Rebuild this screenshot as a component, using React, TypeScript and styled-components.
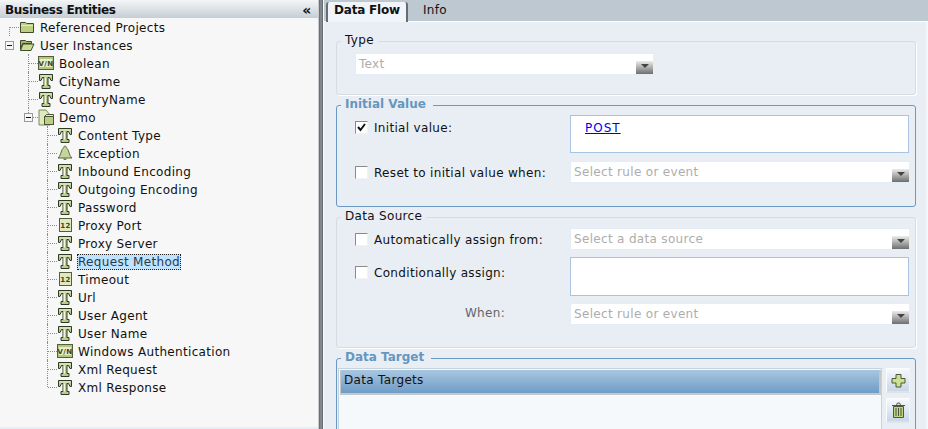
import { ReactNode } from 'react'
import styled, { createGlobalStyle, css } from 'styled-components'

const GlobalStyle = createGlobalStyle`
  html, body {
    margin: 0;
    padding: 0;
    background: #f7f7f7;
    overflow: hidden;
  }
  * {
    box-sizing: border-box;
  }
`

const Page = styled.div`
  width: 928px;
  height: 429px;
  display: flex;
  overflow: hidden;
  font-family: 'DejaVu Sans', Verdana, sans-serif;
  font-size: 12px;
  letter-spacing: 0.32px;
  color: #111;
`

const LeftPanel = styled.div`
  width: 318px;
  height: 429px;
  display: flex;
  flex-direction: column;
  background: #f7f7f7;
`

const PanelHeader = styled.div`
  height: 18px;
  flex: none;
  padding: 2px 7px 0 5px;
  display: flex;
  align-items: center;
  justify-content: space-between;
  background: linear-gradient(#f4f6f7, #c6ced4);
  font-weight: bold;
  letter-spacing: -0.3px;
`

const Collapse = styled.span`
  font-size: 14px;
  line-height: 14px;
  font-weight: bold;
`

const Tree = styled.div`
  flex: 1;
`

const FooterStrip = styled.div`
  height: 2px;
  flex: none;
  background: #e9eef5;
`

const Row = styled.div`
  height: 18px;
  display: flex;
  align-items: center;
`

const Guide = styled.div<{ $kind: GuideKind }>`
  position: relative;
  width: 19px;
  height: 18px;
  flex: none;

  ${({ $kind }) =>
    $kind !== 'none' &&
    css`
      &::before {
        content: '';
        position: absolute;
        left: 9px;
        top: ${$kind === 'first' ? '9px' : '0'};
        height: ${$kind === 'last' || $kind === 'first' ? '9px' : '18px'};
        border-left: 1px dotted #8d8d8d;
      }
    `}

  ${({ $kind }) =>
    $kind !== 'none' &&
    $kind !== 'line' &&
    css`
      &::after {
        content: '';
        position: absolute;
        left: 10px;
        top: 9px;
        width: 9px;
        border-top: 1px dotted #8d8d8d;
      }
    `}
`

const Toggle = styled.div`
  position: absolute;
  z-index: 1;
  left: 5px;
  top: 5px;
  width: 9px;
  height: 9px;
  border: 1px solid #9a9a9a;
  background: #f7f7f7;

  &::after {
    content: '';
    position: absolute;
    left: 1px;
    top: 3px;
    width: 5px;
    height: 1px;
    background: #111;
  }
`

const IconSlot = styled.div`
  width: 16px;
  height: 18px;
  flex: none;
  display: flex;
  align-items: center;
  justify-content: center;
`

const RowLabel = styled.span<{ $selected?: boolean }>`
  margin-left: 4px;
  padding: 0 1px;
  height: 16px;
  align-self: flex-end;
  line-height: 16px;
  white-space: nowrap;
  ${({ $selected }) =>
    $selected &&
    css`
      background: #bfe3ff;
      outline: 1px dotted #222;
      outline-offset: -1px;
      color: #2a3a4a;
    `}
`

const Splitter = styled.div`
  width: 6px;
  flex: none;
  display: flex;
`

const SplitterBar = styled.div`
  width: 5px;
  background: linear-gradient(90deg, #c8ccd0 0, #c8ccd0 1px, #5d6368 1px, #8d9499 3px, #5d6368 5px);
`

const RightPanel = styled.div`
  flex: 1;
  min-width: 0;
  display: flex;
  flex-direction: column;
  background: #f4f6f9;
`

const TabBar = styled.div`
  height: 22px;
  flex: none;
  display: flex;
  padding: 2px 0 0 2px;
  background: #bdc8d1;
  border-bottom: 1px solid #fff;
`

const Tab = styled.div<{ $active?: boolean }>`
  height: 20px;
  line-height: 17px;
  ${({ $active }) =>
    $active
      ? css`
          width: 82px;
          padding-left: 6px;
          background: #f1f4f8;
          font-weight: bold;
          letter-spacing: -0.2px;
          border: solid #656c72;
          border-width: 0 2px;
          border-radius: 3px 3px 0 0;
        `
      : css`
          padding-left: 15px;
        `}
`

const Content = styled.div`
  flex: 1;
  min-height: 0;
  margin-right: 2px;
  padding: 11px 10px 0 12px;
  background: #e9eef5;
  display: flex;
  flex-direction: column;
  gap: 2px;
  overflow: hidden;
`

const Group = styled.fieldset<{ $accent?: boolean; $height: number }>`
  margin: 0;
  min-width: 0;
  height: ${({ $height }) => $height}px;
  flex: none;
  padding: 0 6px 0 18px;
  border: 1px solid ${({ $accent }) => ($accent ? '#6a98c2' : '#d6dce1')};
  border-radius: 3px;
  ${({ $accent }) => !$accent && 'box-shadow: 1px 1px 0 #fff;'}
`

const Legend = styled.legend<{ $accent?: boolean }>`
  margin-left: -14px;
  padding: 0 4px;
  height: 16px;
  line-height: 14px;
  background: #e9eef5;
  ${({ $accent }) =>
    $accent &&
    css`
      padding-right: 7px;
      font-weight: bold;
      letter-spacing: 0;
      line-height: 15px;
      color: #6596c0;
    `}
`

const FormRow = styled.div<{ $top: number }>`
  margin-top: ${({ $top }) => $top}px;
  display: flex;
  align-items: flex-start;
`

const CheckLabel = styled.div<{ $offset: number }>`
  width: 215px;
  flex: none;
  display: flex;
  align-items: center;
  gap: 6px;
  height: 13px;
  white-space: nowrap;
  margin-top: ${({ $offset }) => $offset}px;
`

const RightLabel = styled.div`
  width: 215px;
  flex: none;
  height: 22px;
  line-height: 20px;
  padding-right: 65px;
  text-align: right;
  color: #666;
`

const CheckBox = styled.span`
  width: 13px;
  height: 13px;
  flex: none;
  display: flex;
  align-items: center;
  justify-content: center;
  background: #fff;
  border: solid;
  border-width: 1px;
  border-color: #8a8a8a #f2f2f2 #f2f2f2 #8a8a8a;
`

const TextBox = styled.div<{ $height: number }>`
  width: 339px;
  height: ${({ $height }) => $height}px;
  padding: 5px 14px;
  background: #fff;
  border: 1px solid #a9c4e0;
`

const ValueLink = styled.a`
  color: #0000ee;
  letter-spacing: 1px;
  text-decoration: underline;
`

const SelectBox = styled.div<{ $width: number }>`
  width: ${({ $width }) => $width}px;
  height: 22px;
  flex: none;
  display: flex;
  padding-left: 3px;
  background: #fff;
  border: solid #e4ecf6;
  border-width: 1px 0 1px 1px;
  color: #adadad;
  line-height: 20px;
`

const SelectText = styled.span`
  flex: 1;
`

const SelectArrow = styled.span`
  width: 17px;
  height: 13px;
  flex: none;
  align-self: flex-end;
  display: flex;
  justify-content: center;
  padding-top: 3px;
  background: linear-gradient(#ececec, #6e6e6e);

  &::before {
    content: '';
    border: solid transparent;
    border-width: 4px 4px 0;
    border-top-color: #444;
    height: 0;
  }
`

const TargetBody = styled.div`
  margin: 2px 0 0 -17px;
  display: flex;
  gap: 4px;
`

const TargetGrid = styled.div`
  width: 544px;
  height: 90px;
  flex: none;
  padding: 1px 0 0 1px;
  background: #f5f9fc;
  border: 1px solid #c3d3df;
`

const GridHeader = styled.div`
  height: 25px;
  padding-left: 3px;
  line-height: 21px;
  background: linear-gradient(#a9c6e0, #6f9cc6);
  border: solid #c4c8cb;
  border-width: 0 2px 2px 1px;
`

const ButtonColumn = styled.div`
  display: flex;
  flex-direction: column;
  gap: 5px;
`

const ToolButton = styled.div`
  width: 24px;
  height: 25px;
  display: flex;
  align-items: center;
  justify-content: center;
  background: linear-gradient(#f6f9fc, #c9d7e9);
  border: solid;
  border-width: 1px 1px 2px 1px;
  border-color: #fbfcfe #f0f3f7 #dfe3e8 #fbfcfe;
`

type GuideKind = 'none' | 'line' | 'tee' | 'last' | 'first'

const TypeIcon = () => (
  <svg width="16" height="17" viewBox="0 0 16 17">
    <path
      d="M1.500 1.500h13v6h-1.500l-1.500-3h-1.500v8h2v3h-8v-3h2v-8H4.500L3 7.500H1.500z"
      fill="#b9cd8a"
      stroke="#2f3a22"
    />
    <path d="M6.500 4.500h1.500v8H6.500zM2.500 2.500h11v1h-11z" fill="#f1f6df" />
    <path d="M9 4.500h.5v8H9z" fill="#5f6f3c" />
  </svg>
)

const FolderIcon = () => (
  <svg width="16" height="14" viewBox="0 0 16 14">
    <path d="M1.500 2.500h5l1 1h7v9h-13z" fill="#bccf85" stroke="#3f4a2a" />
    <path d="M2 5h12v1H2z" fill="#e6eec8" />
  </svg>
)

const OpenFolderIcon = () => (
  <svg width="16" height="14" viewBox="0 0 16 14">
    <path d="M1.500 2.500h5l1 1h5v2h-9l-2 6z" fill="#a3b66c" stroke="#3f4a2a" />
    <path d="M4 6h11l-3 6.500H1.500z" fill="#cbdc97" stroke="#3f4a2a" />
  </svg>
)

const BoxIcon = ({ label }: { label: string }) => (
  <svg width="16" height="14" viewBox="0 0 16 14">
    <rect x="0.500" y="0.500" width="15" height="13" fill="#b4c77c" stroke="#555e3c" />
    <rect x="2" y="3" width="12" height="8" fill="#e7efc9" />
    <text x="8" y="10" textAnchor="middle" fontSize="7" fontWeight="bold" fontFamily="'DejaVu Sans', sans-serif" fill="#3a4426">
      {label}
    </text>
  </svg>
)

const CounterIcon = () => (
  <svg width="14" height="14" viewBox="0 0 14 14">
    <rect x="1.500" y="0.500" width="12" height="13" fill="#dfe9bd" stroke="#555e3c" />
    <text x="7.500" y="10" textAnchor="middle" fontSize="7" fontWeight="bold" fontFamily="'DejaVu Sans', sans-serif" fill="#3a4426">
      12
    </text>
  </svg>
)

const BellIcon = () => (
  <svg width="16" height="16" viewBox="0 0 16 16">
    <path d="M8 1c1 0 1 1 1.500 2C12 4 11.500 10 15 13H1C4.500 10 4 4 6.500 3 7 2 7 1 8 1z" fill="#c4d69a" stroke="#59653f" />
    <path d="M6 13.500h4L9 15H7z" fill="#6f7c4f" />
  </svg>
)

const PackageIcon = () => (
  <svg width="16" height="17" viewBox="0 0 16 17">
    <path d="M1 1h7l4 5v10H1z" fill="#dfe9bd" stroke="#7c8a58" />
    <rect x="6.500" y="7.500" width="9" height="8" fill="#bccd8a" stroke="#4b5533" />
    <path d="M6.500 7.500l2-2h7v2z" fill="#e7efc9" stroke="#4b5533" />
  </svg>
)

const CheckMark = () => (
  <svg width="11" height="11" viewBox="0 0 11 11">
    <path d="M2 5l2.500 3L9 2" fill="none" stroke="#111" strokeWidth="2" />
  </svg>
)

const AddIcon = () => (
  <svg width="15" height="15" viewBox="0 0 15 15">
    <path
      d="M5 1.500h5v4h4v4.500h-4v4H5v-4H1V5.500h4z"
      fill="#cddf93"
      stroke="#4d5636"
    />
  </svg>
)

const TrashIcon = () => (
  <svg width="15" height="17" viewBox="0 0 15 17">
    <path d="M1 3.500h13M5.500 3l1-2h2l1 2" fill="none" stroke="#4d5636" />
    <path d="M2.500 4.500h10v11h-10z" fill="#bfd483" stroke="#4d5636" />
    <path d="M5 6v8M7.500 6v8M10 6v8" stroke="#4d5636" />
  </svg>
)

type TreeItem = {
  label: string
  guides: GuideKind[]
  icon: ReactNode
  toggle?: boolean
  selected?: boolean
}

const lvl2 = (label: string, icon: ReactNode, last = false, selected = false): TreeItem => ({
  label,
  icon,
  selected,
  guides: ['none', 'none', last ? 'last' : 'tee'],
})

const items: TreeItem[] = [
  { label: 'Referenced Projects', guides: ['first'], icon: <FolderIcon /> },
  { label: 'User Instances', guides: ['none'], icon: <OpenFolderIcon />, toggle: true },
  { label: 'Boolean', guides: ['none', 'tee'], icon: <BoxIcon label="V/N" /> },
  { label: 'CityName', guides: ['none', 'tee'], icon: <TypeIcon /> },
  { label: 'CountryName', guides: ['none', 'tee'], icon: <TypeIcon /> },
  { label: 'Demo', guides: ['none', 'last'], icon: <PackageIcon />, toggle: true },
  lvl2('Content Type', <TypeIcon />),
  lvl2('Exception', <BellIcon />),
  lvl2('Inbound Encoding', <TypeIcon />),
  lvl2('Outgoing Encoding', <TypeIcon />),
  lvl2('Password', <TypeIcon />),
  lvl2('Proxy Port', <CounterIcon />),
  lvl2('Proxy Server', <TypeIcon />),
  lvl2('Request Method', <TypeIcon />, false, true),
  lvl2('Timeout', <CounterIcon />),
  lvl2('Url', <TypeIcon />),
  lvl2('User Agent', <TypeIcon />),
  lvl2('User Name', <TypeIcon />),
  lvl2('Windows Authentication', <BoxIcon label="V/N" />),
  lvl2('Xml Request', <TypeIcon />),
  lvl2('Xml Response', <TypeIcon />, true),
]

const App = () => (
  <Page>
    <GlobalStyle />
    <LeftPanel>
      <PanelHeader>
        Business Entities
        <Collapse>«</Collapse>
      </PanelHeader>
      <Tree>
        {items.map((item) => (
          <Row key={item.label}>
            {item.guides.map((kind, i) => (
              <Guide key={i} $kind={kind}>
                {item.toggle && i === item.guides.length - 1 && <Toggle />}
              </Guide>
            ))}
            <IconSlot>{item.icon}</IconSlot>
            <RowLabel $selected={item.selected}>{item.label}</RowLabel>
          </Row>
        ))}
      </Tree>
      <FooterStrip />
    </LeftPanel>
    <Splitter>
      <SplitterBar />
    </Splitter>
    <RightPanel>
      <TabBar>
        <Tab $active>Data Flow</Tab>
        <Tab>Info</Tab>
      </TabBar>
      <Content>
        <Group $height={62}>
          <Legend>Type</Legend>
          <FormRow $top={4}>
            <SelectBox $width={298}>
              <SelectText>Text</SelectText>
              <SelectArrow />
            </SelectBox>
          </FormRow>
        </Group>

        <Group $accent $height={110}>
          <Legend $accent>Initial Value</Legend>
          <FormRow $top={2}>
            <CheckLabel $offset={6}>
              <CheckBox>
                <CheckMark />
              </CheckBox>
              Initial value:
            </CheckLabel>
            <TextBox $height={38}>
              <ValueLink href="#">POST</ValueLink>
            </TextBox>
          </FormRow>
          <FormRow $top={8}>
            <CheckLabel $offset={5}>
              <CheckBox />
              Reset to initial value when:
            </CheckLabel>
            <SelectBox $width={339}>
              <SelectText>Select rule or event</SelectText>
              <SelectArrow />
            </SelectBox>
          </FormRow>
        </Group>

        <Group $height={139}>
          <Legend>Data Source</Legend>
          <FormRow $top={3}>
            <CheckLabel $offset={5}>
              <CheckBox />
              Automatically assign from:
            </CheckLabel>
            <SelectBox $width={339}>
              <SelectText>Select a data source</SelectText>
              <SelectArrow />
            </SelectBox>
          </FormRow>
          <FormRow $top={7}>
            <CheckLabel $offset={9}>
              <CheckBox />
              Conditionally assign:
            </CheckLabel>
            <TextBox $height={39} />
          </FormRow>
          <FormRow $top={7}>
            <RightLabel>When:</RightLabel>
            <SelectBox $width={339}>
              <SelectText>Select rule or event</SelectText>
              <SelectArrow />
            </SelectBox>
          </FormRow>
        </Group>

        <Group $accent $height={110}>
          <Legend $accent>Data Target</Legend>
          <TargetBody>
            <TargetGrid>
              <GridHeader>Data Targets</GridHeader>
            </TargetGrid>
            <ButtonColumn>
              <ToolButton>
                <AddIcon />
              </ToolButton>
              <ToolButton>
                <TrashIcon />
              </ToolButton>
            </ButtonColumn>
          </TargetBody>
        </Group>
      </Content>
    </RightPanel>
  </Page>
)

export default App
